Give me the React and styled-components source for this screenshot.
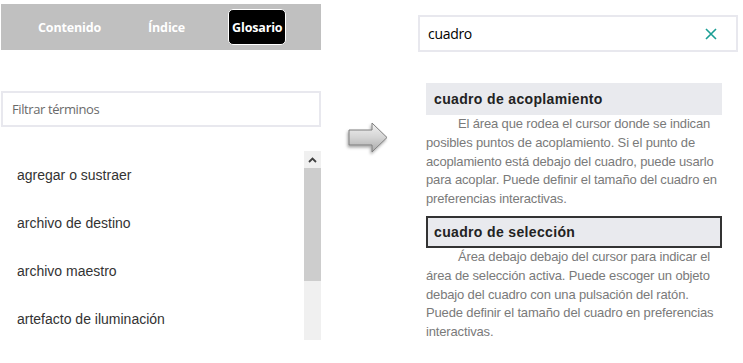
import React from "react";
import styled, { createGlobalStyle } from "styled-components";

const GlobalStyle = createGlobalStyle`
  html, body {
    margin: 0;
    padding: 0;
    background: #ffffff;
  }
  body {
    font-family: "Liberation Sans", Arial, sans-serif;
  }
`;

const Page = styled.div`
  display: flex;
  align-items: flex-start;
  width: 743px;
  height: 363px;
  overflow: hidden;
`;

// Left side: glossary panel
const LeftPanel = styled.div`
  width: 320px;
  margin: 4px 0 0 1px;
  display: flex;
  flex-direction: column;
`;

const TabBar = styled.div`
  height: 46px;
  background: #c0c0c0;
  display: flex;
  align-items: center;
  padding-left: 33px;
  gap: 39px;
`;

const Tab = styled.div`
  height: 36px;
  box-sizing: border-box;
  padding: 0 3px;
  display: flex;
  align-items: center;
  border-radius: 5px;
  border: 1px solid ${(p) => (p.$active ? "#ffffff" : "transparent")};
  background: ${(p) => (p.$active ? "#000000" : "transparent")};
  color: #ffffff;
  font-family: "Open Sans", sans-serif;
  font-weight: 700;
  font-size: 12.5px;
  letter-spacing: -0.15px;
`;

const FilterBox = styled.div`
  margin-top: 41px;
  height: 36px;
  box-sizing: border-box;
  border: 2px solid #e8e8ee;
  display: flex;
  align-items: center;
  padding-left: 9px;
  color: #6a6a6a;
  font-family: "Open Sans", sans-serif;
  font-size: 13px;
  letter-spacing: -0.4px;
`;

const ListArea = styled.div`
  margin-top: 24px;
  height: 189px;
  display: flex;
  overflow: hidden;
`;

const Items = styled.ul`
  flex: 1;
  margin: 0;
  padding: 0;
  list-style: none;
`;

const Item = styled.li`
  height: 48px;
  display: flex;
  align-items: center;
  padding-left: 16px;
  color: #333333;
  font-size: 14px;
`;

const ScrollBar = styled.div`
  width: 17px;
  display: flex;
  flex-direction: column;
  background: #f0f0f0;
`;

const ScrollButton = styled.div`
  height: 17px;
  display: flex;
  align-items: center;
  justify-content: center;
`;

const ScrollThumb = styled.div`
  height: 113px;
  background: #cdcdcd;
`;

// Middle arrow
const ArrowColumn = styled.div`
  width: 97px;
  padding-top: 119px;
  padding-left: 22px;
  box-sizing: border-box;
`;

// Right side: search result
const RightPanel = styled.div`
  width: 320px;
  margin-top: 15px;
  display: flex;
  flex-direction: column;
`;

const SearchBox = styled.div`
  height: 37px;
  box-sizing: border-box;
  border: 2px solid #e8e8ee;
  display: flex;
  align-items: center;
  justify-content: space-between;
  padding: 0 19px 0 8px;
  color: #000000;
  font-family: "Open Sans", sans-serif;
  font-size: 14px;
  letter-spacing: -0.3px;
`;

const Results = styled.div`
  width: 296px;
  margin: 31px 0 0 8px;
  display: flex;
  flex-direction: column;
`;

const Term = styled.div`
  height: 32px;
  box-sizing: border-box;
  display: flex;
  align-items: center;
  padding-left: 6px;
  background: #e9eaee;
  border: 2px solid ${(p) => (p.$focused ? "#333333" : "#e9eaee")};
  margin-top: ${(p) => (p.$first ? "0" : "7px")};
  color: #222222;
  font-weight: 700;
  font-size: 14px;
  letter-spacing: 0.35px;
`;

const Definition = styled.p`
  margin: 0;
  color: #7a7a7a;
  font-size: 13px;
  line-height: 18.8px;
  letter-spacing: -0.15px;
  text-indent: 32px;
`;

const ArrowIcon = () => (
  <svg width="50" height="38" viewBox="0 0 50 38">
    <defs>
      <linearGradient id="arrowFill" x1="0" y1="0" x2="0" y2="1">
        <stop offset="0" stopColor="#f2f2f2" />
        <stop offset="0.5" stopColor="#d4d4d4" />
        <stop offset="1" stopColor="#a9a9a9" />
      </linearGradient>
      <filter id="arrowShadow" x="-30%" y="-30%" width="160%" height="160%">
        <feDropShadow dx="-1" dy="2" stdDeviation="1.5" floodColor="#000" floodOpacity="0.35" />
      </filter>
    </defs>
    <path
      d="M6 11 H29 V4 L44 18.5 L29 33 V26 H6 Z"
      fill="url(#arrowFill)"
      stroke="#7d7d7d"
      strokeWidth="1"
      strokeLinejoin="miter"
      filter="url(#arrowShadow)"
    />
  </svg>
);

const CloseIcon = () => (
  <svg width="12" height="12" viewBox="0 0 12 12">
    <path d="M1 1 L11 11 M11 1 L1 11" stroke="#1a9e94" strokeWidth="1.6" />
  </svg>
);

const CaretUp = () => (
  <svg width="9" height="6" viewBox="0 0 9 6">
    <path d="M1 5 L4.5 1.5 L8 5" fill="none" stroke="#404040" strokeWidth="1.8" />
  </svg>
);

const terms = [
  "agregar o sustraer",
  "archivo de destino",
  "archivo maestro",
  "artefacto de iluminación",
];

const results = [
  {
    term: "cuadro de acoplamiento",
    text:
      "El área que rodea el cursor donde se indican posibles puntos de acoplamiento. Si el punto de acoplamiento está debajo del cuadro, puede usarlo para acoplar. Puede definir el tamaño del cuadro en preferencias interactivas.",
  },
  {
    term: "cuadro de selección",
    focused: true,
    text:
      "Área debajo debajo del cursor para indicar el área de selección activa. Puede escoger un objeto debajo del cuadro con una pulsación del ratón. Puede definir el tamaño del cuadro en preferencias interactivas.",
  },
];

export default function App() {
  return (
    <>
      <GlobalStyle />
      <Page>
        <LeftPanel>
          <TabBar>
            <Tab>Contenido</Tab>
            <Tab>Índice</Tab>
            <Tab $active>Glosario</Tab>
          </TabBar>
          <FilterBox>Filtrar términos</FilterBox>
          <ListArea>
            <Items>
              {terms.map((t) => (
                <Item key={t}>{t}</Item>
              ))}
            </Items>
            <ScrollBar>
              <ScrollButton>
                <CaretUp />
              </ScrollButton>
              <ScrollThumb />
            </ScrollBar>
          </ListArea>
        </LeftPanel>

        <ArrowColumn>
          <ArrowIcon />
        </ArrowColumn>

        <RightPanel>
          <SearchBox>
            <span>cuadro</span>
            <CloseIcon />
          </SearchBox>
          <Results>
            {results.map((r, i) => (
              <React.Fragment key={r.term}>
                <Term $first={i === 0} $focused={r.focused}>
                  {r.term}
                </Term>
                <Definition>{r.text}</Definition>
              </React.Fragment>
            ))}
          </Results>
        </RightPanel>
      </Page>
    </>
  );
}
